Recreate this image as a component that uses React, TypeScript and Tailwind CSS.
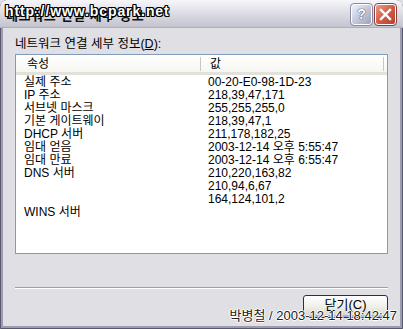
import React from "react";

const rows: [string, string][] = [
  ["실제 주소", "00-20-E0-98-1D-23"],
  ["IP 주소", "218,39,47,171"],
  ["서브넷 마스크", "255,255,255,0"],
  ["기본 게이트웨이", "218,39,47,1"],
  ["DHCP 서버", "211,178,182,25"],
  ["임대 얻음", "2003-12-14 오후 5:55:47"],
  ["임대 만료", "2003-12-14 오후 6:55:47"],
  ["DNS 서버", "210,220,163,82"],
  ["", "210,94,6,67"],
  ["", "164,124,101,2"],
  ["WINS 서버", ""],
];

const font = "font-['Liberation_Sans','Noto_Sans_CJK_KR',sans-serif]";

export default function App() {
  return (
    <div
      className={`relative w-[403px] h-[329px] overflow-hidden bg-[#e0dfe3] ${font} text-[12px] text-black`}
    >
      <div className="flex flex-col w-full h-full rounded-t-[7px] border-x-[3px] border-b-[3px] border-[#9c9cac] outline outline-1 outline-[#585870] -outline-offset-1">
        {/* Title bar */}
        <div className="relative h-[28px] flex items-center bg-gradient-to-b from-[#f6f6fa] via-[#dcdce4] to-[#c4c4cf] -mx-[3px] px-[5px] rounded-t-[7px] border-b border-[#b0b0bc]">
          <div className="relative h-[22px] w-[220px]">
            <span className="absolute left-[1px] top-[5px] font-bold text-[13px] leading-[16px] tracking-[0.6px] text-[#101010]">
              네트워크 연결 세부 정보
            </span>
            <span className="absolute left-0 top-[-1px] font-bold text-[14px] leading-[18px] text-white [text-shadow:1px_0_0_#000,-1px_0_0_#000,0_1px_0_#000,0_-1px_0_#000,1px_1px_0_#000,-1px_-1px_0_#000,1px_-1px_0_#000,-1px_1px_0_#000] tracking-[0.9px]">
              http://www.bcpark.net
            </span>
          </div>
          <div className="ml-auto flex gap-[3px] mr-[2px] mt-[1px]">
            <div className="w-[21px] h-[21px] rounded-[3px] border border-white bg-gradient-to-br from-[#f0f2fa] via-[#c4c8dc] to-[#9ca2bc] outline outline-1 outline-[#8a8aa0] flex items-center justify-center text-white font-bold text-[14px] [text-shadow:0_0_1px_#303050,0_0_1px_#303050] leading-none">
              ?
            </div>
            <div className="w-[21px] h-[21px] rounded-[3px] border border-white bg-gradient-to-br from-[#ec9a88] via-[#d25c46] to-[#b8402c] outline outline-1 outline-[#8a4040] flex items-center justify-center">
              <svg width="13" height="13" viewBox="0 0 13 13">
                <path d="M2 2 L11 11 M11 2 L2 11" stroke="white" strokeWidth="2.4" strokeLinecap="square" />
              </svg>
            </div>
          </div>
        </div>

        {/* Body */}
        <div className="flex-1 flex flex-col px-[12px] pt-[9px]">
          <div className="leading-[14px] text-[12.5px]">
            네트워크 연결 세부 정보(<span className="underline">D</span>):
          </div>
          <div className="mt-[3px] h-[200px] border border-[#7f9db9] bg-white flex flex-col">
            <div className="flex h-[20px] items-center border-b-[3px] border-[#e2e2da] bg-[linear-gradient(#ffffff,#f6f6f2)] mx-0">
              <div className="w-[185px] pl-[11px] border-r border-[#c8c8c0] h-[14px] leading-[14px]">속성</div>
              <div className="flex-1 pl-[9px] leading-[14px] border-r border-[#c8c8c0] h-[14px] mr-[3px]">값</div>
            </div>
            <div className="pt-[1px]">
              {rows.map(([k, v], i) => (
                <div key={i} className="flex h-[13px] leading-[13px] whitespace-nowrap">
                  <div className="w-[185px] pl-[8px]">{k}</div>
                  <div className="pl-[7px]">{v}</div>
                </div>
              ))}
            </div>
          </div>
          <div className="mt-[33px] h-[2px] border-t border-[#a0a0a8] border-b border-b-white" />
          <div className="mt-[6px] flex justify-end">
            <div className="w-[85px] h-[23px] rounded-[3px] border border-[#003c74] bg-gradient-to-b from-white via-[#f0f0ea] to-[#d6d0c5] flex items-start pt-[2px] justify-center text-[13px] leading-[14px] shadow-[inset_0_-2px_0_#9eb4e0]">
              닫기(C)
            </div>
          </div>
        </div>
      </div>
      {/* watermark */}
      <div className="absolute right-[6px] bottom-[6px] text-[13px] leading-[14px] text-[#202020] [text-shadow:1px_0_0_#fff,-1px_0_0_#fff,0_1px_0_#fff,0_-1px_0_#fff]">
        박병철 / 2003-12-14 18:42:47
      </div>
    </div>
  );
}
